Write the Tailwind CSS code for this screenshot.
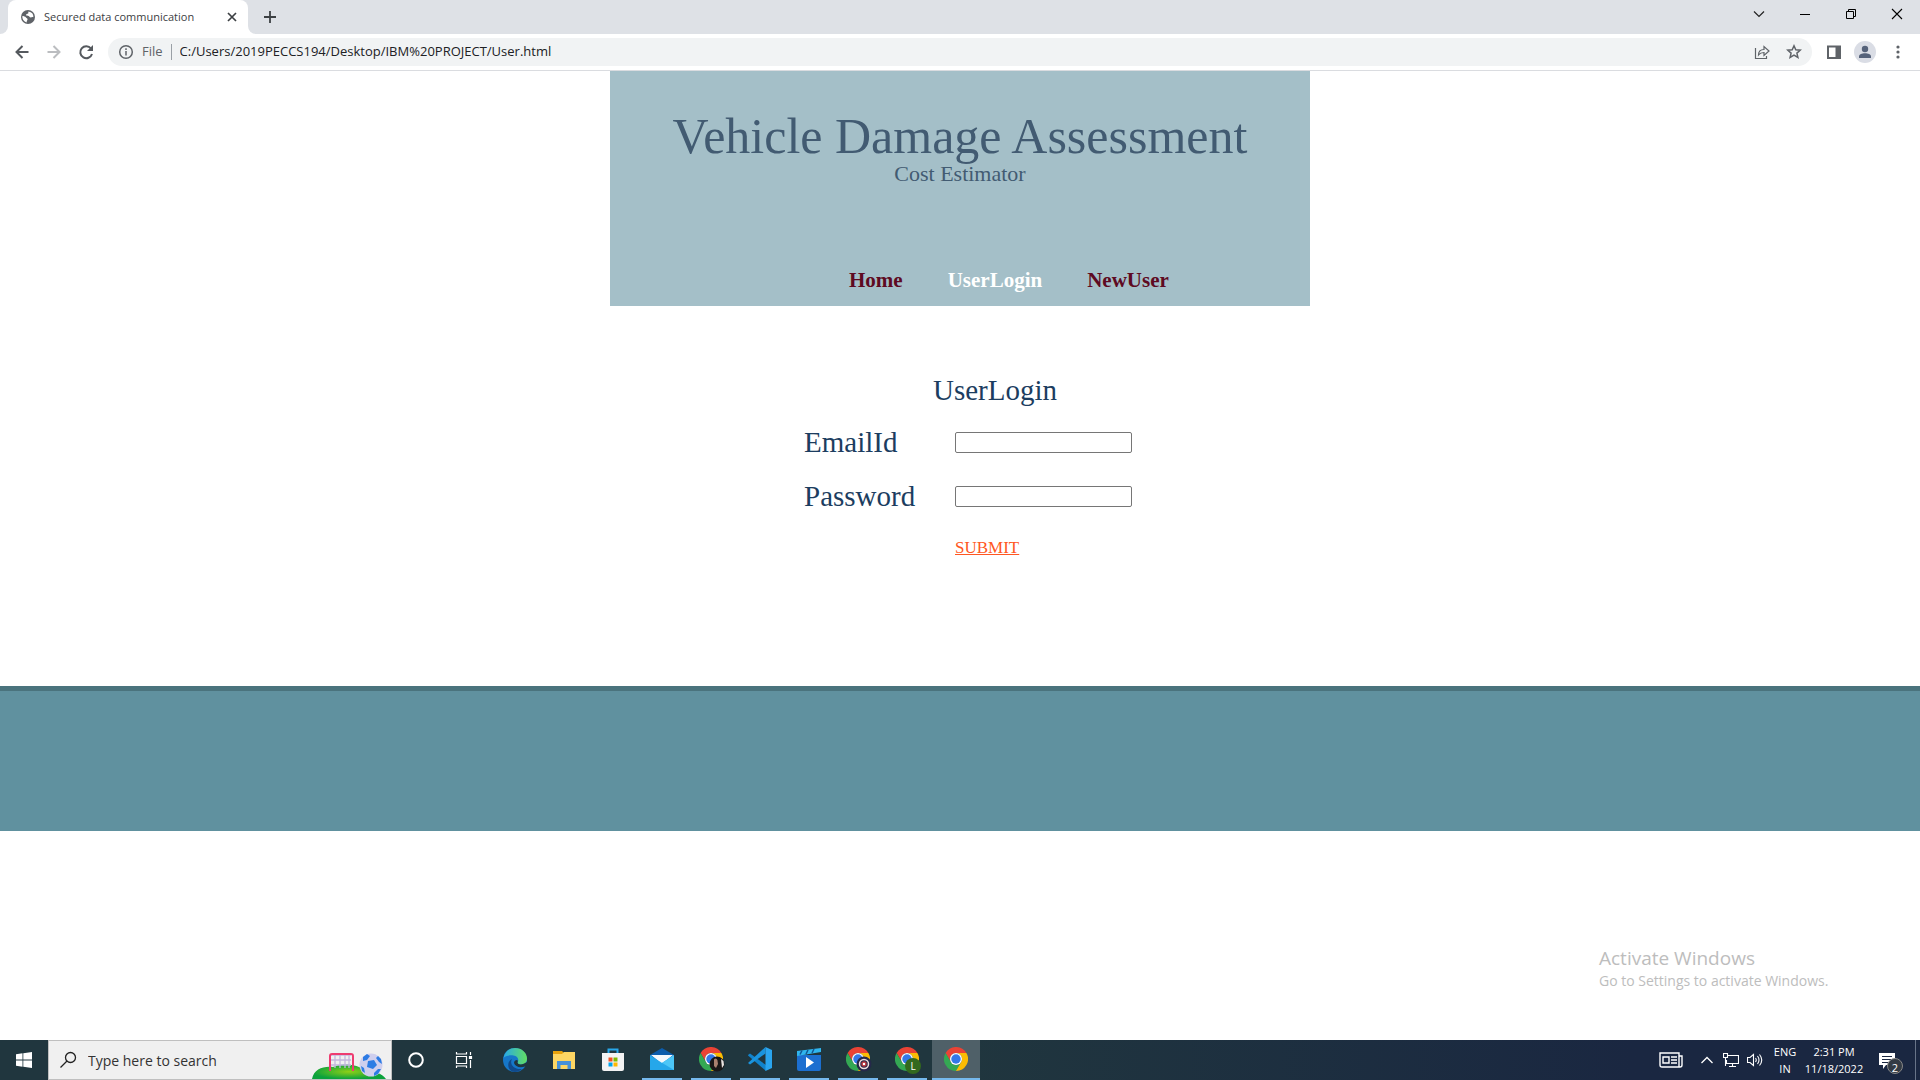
<!DOCTYPE html>
<html lang="en">
<head>
<meta charset="utf-8">
<title>Secured data communication</title>
<script src="https://cdn.jsdelivr.net/npm/@tailwindcss/browser@4"></script>
</head>
<body class="flex min-h-screen flex-col bg-white font-['Open_Sans',sans-serif] text-[#202124]">
<svg class="hidden">
  <symbol id="chrome" viewBox="0 0 48 48">
    <path fill="#ea4335" d="M3.2 12A24 24 0 0 1 44.8 12H24A12 12 0 0 0 13.6 30z"/>
    <path fill="#34a853" d="M3.2 12A24 24 0 0 0 24 48L34.4 30A12 12 0 0 1 13.6 30z"/>
    <path fill="#fbbc04" d="M44.8 12A24 24 0 0 1 24 48L34.4 30A12 12 0 0 0 24 12z"/>
    <circle cx="24" cy="24" r="12" fill="#fff"/><circle cx="24" cy="24" r="9.5" fill="#3478e8"/>
  </symbol>
</svg>

<!-- Browser window chrome -->
<div class="flex h-[34px] bg-[#dee1e6]">
  <div class="flex w-2 bg-white"><div class="flex-1 rounded-br-lg bg-[#dee1e6]"></div></div>
  <div class="flex w-60 items-center rounded-t-lg bg-white pr-2.5 pl-3">
    <svg class="size-4 shrink-0" viewBox="0 0 16 16"><circle cx="8" cy="8" r="7" fill="#5f6368"/><path fill="#fff" d="M8.5 2.4c-.6 1 .4 1.500-.4 2.200-.8.600-2 .4-2 1.400 0 1 1.500.6 2.600.9 1 .4.900 1.500 2 1.500.9 0 1.500-.500 2.700-.2A5.700 5.700 0 0 0 8.500 2.400zM2.400 7c1 0 3 .5 3.600 1.500.4.800 1.600.8 1.600 1.800s-1 1-.9 3.200A5.700 5.700 0 0 1 2.400 7z"/></svg>
    <span class="ml-2 flex-1 text-[11px] whitespace-nowrap text-[#3c4043]">Secured data communication</span>
    <button class="size-3" aria-label="Close tab"><svg viewBox="0 0 12 12" stroke="#3c4043" stroke-width="1.700"><path d="M2 2l8 8M10 2l-8 8"/></svg></button>
  </div>
  <div class="flex w-2 bg-white"><div class="flex-1 rounded-bl-lg bg-[#dee1e6]"></div></div>
  <button class="ml-1.5 w-4" aria-label="New tab"><svg viewBox="0 0 16 16" stroke="#3c4043" stroke-width="1.800"><path d="M8 2v12M2 8h12"/></svg></button>
  <div class="ml-auto flex h-7 items-center">
    <button class="grid w-[46px] place-items-center" aria-label="Search tabs"><svg class="size-3" viewBox="0 0 12 12" fill="none" stroke="#222" stroke-width="1.200"><path d="M1 3.500l5 5 5-5"/></svg></button>
    <button class="grid w-[46px] place-items-center" aria-label="Minimize"><svg class="size-3" viewBox="0 0 12 12" stroke="#000"><path d="M1 6.500h10"/></svg></button>
    <button class="grid w-[46px] place-items-center" aria-label="Restore"><svg class="size-3" viewBox="0 0 12 12" fill="none" stroke="#000"><path d="M1.500 3.500h7v7h-7zM3.500 3.500v-2h7v7h-2"/></svg></button>
    <button class="grid w-[46px] place-items-center" aria-label="Close"><svg class="size-3" viewBox="0 0 12 12" stroke="#000" stroke-width="1.100"><path d="M1 1l10 10M11 1L1 11"/></svg></button>
  </div>
</div>
<div class="flex h-[37px] items-center border-b border-[#dadce0] pl-3">
  <button aria-label="Back"><svg class="size-5" viewBox="0 0 20 20" fill="none" stroke="#55595e" stroke-width="2"><path d="M16.500 10H4M10.500 4L4.500 10l6 6"/></svg></button>
  <button class="ml-3" aria-label="Forward"><svg class="size-5" viewBox="0 0 20 20" fill="none" stroke="#bbbdc0" stroke-width="2"><path d="M3.500 10H16M9.500 4l6 6-6 6"/></svg></button>
  <button class="ml-3" aria-label="Reload"><svg class="size-5" viewBox="0 0 20 20"><path d="M15 6.500A6 6 0 1 0 16 12" fill="none" stroke="#55595e" stroke-width="2"/><path d="M17 3v6h-6z" fill="#55595e"/></svg></button>
  <div class="ml-3 flex h-7 flex-1 items-center rounded-full bg-[#f1f3f4] px-2.5">
    <svg class="size-4" viewBox="0 0 16 16" fill="none" stroke="#5f6368" stroke-width="1.500"><circle cx="8" cy="8" r="6.300"/><path d="M8 7v4.500M8 4.300v1.600"/></svg>
    <span class="ml-2 text-[13px] text-[#5f6368]">File</span>
    <span class="mx-2 h-4 w-px bg-[#9aa0a6]"></span>
    <input aria-label="Address" class="min-w-0 flex-1 bg-transparent text-[13px] outline-none" value="C:/Users/2019PECCS194/Desktop/IBM%20PROJECT/User.html">
    <button aria-label="Share"><svg class="size-4" viewBox="0 0 16 16" fill="none" stroke="#5f6368" stroke-width="1.200"><path d="M1.500 4v10.500h11V12M4.500 11c0-4 2.500-5.500 5.500-5.500V2.500l5 4.500-5 4.500v-3c-2.500 0-4 .5-5.500 2.500z"/></svg></button>
    <button class="ml-4" aria-label="Bookmark"><svg class="size-4" viewBox="0 0 16 16" fill="none" stroke="#5f6368" stroke-width="1.500"><path d="M8 1.800l1.800 4 4.400.4-3.300 2.900 1 4.300L8 11.100l-3.900 2.300 1-4.300L1.800 6.200l4.400-.4z"/></svg></button>
  </div>
  <button class="ml-3.5" aria-label="Side panel"><svg class="size-4" viewBox="0 0 16 16"><path fill="#5f6368" d="M1 1.500h14v13.500H1z"/><path fill="#fff" d="M3 3.500h6.500V13H3z"/></svg></button>
  <button class="ml-3" aria-label="Profile"><svg class="size-[22px]" viewBox="0 0 22 22"><circle cx="11" cy="11" r="11" fill="#dadde5"/><circle cx="11" cy="8" r="3.200" fill="#55627a"/><path fill="#55627a" d="M5 17v-1.500c0-2.200 3-3.300 6-3.300s6 1.100 6 3.300V17z"/></svg></button>
  <button class="mr-3.5 ml-3.5" aria-label="Menu"><svg class="size-4" viewBox="0 0 16 16" fill="#5f6368"><circle cx="8" cy="3" r="1.600"/><circle cx="8" cy="8" r="1.600"/><circle cx="8" cy="13" r="1.600"/></svg></button>
</div>

<!-- Page -->
<main class="flex-1 font-['Liberation_Serif',serif]">
  <header class="mx-auto h-[235px] w-[700px] bg-[#a4bfc8] pt-[39px] text-center text-[#425b72]">
    <h1 class="text-[50px] leading-[52px]">Vehicle Damage Assessment</h1>
    <p class="text-[22px] leading-6">Cost Estimator</p>
    <nav class="mt-[82px] ml-[239px] flex gap-[45px] text-[21px] leading-6 font-bold text-[#5e0a22]">
      <a href="#">Home</a><a href="#" class="text-white">UserLogin</a><a href="#">NewUser</a>
    </nav>
  </header>
  <form class="mx-auto h-[380px] w-[344px] pt-16 pl-4 text-[29px] leading-10 text-[#1c3d60]">
    <h2 class="pl-[129px]">UserLogin</h2>
    <div class="mt-3 flex items-center"><label for="email" class="w-[151px] shrink-0">EmailId</label><input id="email" type="text" class="h-[21px] w-[177px] shrink-0 rounded-xs border border-[#767676] px-1 text-sm"></div>
    <div class="mt-3.5 flex items-center"><label for="pw" class="w-[151px] shrink-0">Password</label><input id="pw" type="password" class="h-[21px] w-[177px] shrink-0 rounded-xs border border-[#767676] px-1 text-sm"></div>
    <a href="#" class="mt-3 ml-[151px] block text-[17px] text-[#ff5722] underline">SUBMIT</a>
  </form>
  <footer class="h-[145px] border-t-5 border-[#4a737d] bg-[#60919f]"></footer>
  <div class="ml-auto w-[321px] pt-[113px] font-['Open_Sans',sans-serif] text-[#bdbdbd]">
    <p class="text-[19px] leading-7">Activate Windows</p>
    <p class="text-[14px] leading-[18px] whitespace-nowrap">Go to Settings to activate Windows.</p>
  </div>
</main>

<!-- Taskbar -->
<div class="flex h-10 items-center bg-linear-to-r from-[#20363e] from-50% to-[#1a2741] to-85% text-white">
  <button class="grid w-12 place-items-center" aria-label="Start"><svg class="size-4" viewBox="0 0 16 16" fill="#fff"><path d="M0 2.200l6.500-.9v6.300H0zM7.300 1.200L16 0v7.600H7.300zM0 8.400h6.500v6.300L0 13.800zM7.300 8.400H16V16l-8.700-1.200z"/></svg></button>
  <div class="flex h-10 w-[344px] items-center border border-[#bfbfbf] bg-[#f0f0f0] pl-2.5">
    <svg class="size-[18px] shrink-0" viewBox="0 0 18 18" fill="none" stroke="#222" stroke-width="1.300"><circle cx="11.500" cy="6.500" r="5"/><path d="M8 10l-6.500 6.500"/></svg>
    <input aria-label="Search" placeholder="Type here to search" class="ml-[11px] w-[180px] text-[14px] outline-none placeholder:text-[#333]">
    <svg class="ml-auto h-[38px] w-[80px] shrink-0" viewBox="0 0 80 38">
      <defs><radialGradient id="hill"><stop offset="0" stop-color="#8fd016"/><stop offset="1" stop-color="#0ba23c"/></radialGradient></defs>
      <path d="M1 38C3 28 12 25 22 26c11-5 25-2 32 3 8 0 18 4 21 9z" fill="url(#hill)"/>
      <path d="M20 14h20M20 19h20M20 24h20M24 13v14M29 13v14M34 13v14M38 13v14" stroke="#c4b7dd" stroke-width="1.300"/>
      <path d="M19 30V15q0-2 2-2h19q2 0 2 2v15" fill="none" stroke="#ee3c70" stroke-width="2"/>
      <circle cx="60" cy="24" r="11.500" fill="#cfcfee"/>
      <path fill="#2d7ce4" d="M57 20l6-1 3 5-4 4-6-2zM52 16l4-3 3 2-3 4-4 1zM67 15l3 3 1 5-3-2-3-4zM50 25l3 2 1 5-3-2zM67 28l3 0-3 5-4 2 0-3z"/>
    </svg>
  </div>
  <button class="grid w-12 place-items-center" aria-label="Cortana"><svg class="size-4" viewBox="0 0 16 16"><circle cx="8" cy="8" r="6.800" fill="none" stroke="#fff" stroke-width="2"/></svg></button>
  <button class="mr-0.5 grid w-12 place-items-center" aria-label="Task view"><svg class="size-[18px]" viewBox="0 0 18 18" fill="none" stroke="#fff" stroke-width="1.200"><path d="M1.500 5.500h10v7h-10zM1.500 1v2h10V1M1.500 17v-2h10v2M15.500 1v3M15.500 9v8"/><path fill="#fff" d="M14.500 5.500h2v2h-2z"/></svg></button>
  <div class="flex h-10 gap-[9px] pl-[5px]">
    <button class="grid h-10 w-10 place-items-center" aria-label="Edge"><svg class="size-6" viewBox="0 0 24 24"><defs><linearGradient id="e1"><stop stop-color="#28a8e8"/><stop offset="1" stop-color="#62de62"/></linearGradient></defs><circle cx="12" cy="12" r="12" fill="#1677c9"/><path fill="url(#e1)" d="M.5 10C2 3 7 0 12 0c7 0 12 5 12 10.500 0 4-3 6-6 6-2.500 0-4-1-3.500-2 2-3 0-6.500-4-7C6 7 2 8 .5 10z"/><path fill="#114a8b" d="M9 11c-3 5 2 11 10 10-3 3-7 3.500-10 2.500C4 21 4 13 9 11z"/><path fill="#20363e" d="M14.500 14.500c.5 2.500 5 2.800 9.500-.5v4l-2 .5c-5 2-10 0-11-3.500 0-2 1.500-3 3-3 .8 0 1 1.500.5 2.500z"/></svg></button>
    <button class="grid h-10 w-10 place-items-center" aria-label="File Explorer"><svg class="size-6" viewBox="0 0 24 24"><path fill="#e8a20c" d="M1 3h9l2 2v4H1z"/><path fill="#fdd663" d="M1 6h9l2-2h11v17H1z"/><path fill="#4791d8" d="M5 13h14v8h-3.500v-4h-7v4H5z"/></svg></button>
    <button class="grid h-10 w-10 place-items-center" aria-label="Microsoft Store"><svg class="size-6" viewBox="0 0 24 24"><path d="M7.500 6V1.500h9V6" fill="none" stroke="#28a8ea" stroke-width="2"/><path fill="#f3f3f3" d="M1 5h22v16q0 2-2 2H3q-2 0-2-2z"/><path fill="#f25022" d="M7.500 9.500h4v4h-4z"/><path fill="#7fba00" d="M12.500 9.500h4v4h-4z"/><path fill="#00a4ef" d="M7.500 14.500h4v4h-4z"/><path fill="#ffb900" d="M12.500 14.500h4v4h-4z"/></svg></button>
    <button class="grid h-10 w-10 place-items-center border-b-2 border-[#76b9ed]" aria-label="Mail"><svg class="size-6" viewBox="0 0 24 24"><path fill="#0c5cab" d="M0 8l12-7 12 7v8H0z"/><path fill="#f4f8fc" d="M1 8h22L12 17z"/><path fill="#25a7ea" d="M0 8l12 8 12-8v15H0z"/><path fill="#4cc6f7" d="M24 8v15L9 14l3 2z"/></svg></button>
    <button class="grid h-10 w-10 place-items-center border-b-2 border-[#76b9ed]" aria-label="Chrome profile 1"><svg class="h-[26px] w-7" viewBox="0 0 28 26"><use href="#chrome" x="2" y="1" width="24" height="24"/><circle cx="20" cy="18" r="7.500" fill="#191717"/><path fill="#a97f6e" d="M17 13.500c1-2 3-1 3.500 1l.5 3.500-2 4-2-2z"/><path fill="#e8e4e2" d="M24 13l2.500 2 .5 4-2 3z"/></svg></button>
    <button class="grid h-10 w-10 place-items-center border-b-2 border-[#76b9ed]" aria-label="Visual Studio Code"><svg class="size-6" viewBox="0 0 24 24"><path fill="#1183cc" d="M0 8l2-1.500L18 18v6L.3 8.700z"/><path fill="#1a94de" d="M0 16L17.500 0v6.500L2 17.500z"/><path fill="#2aa5ef" d="M17.500 0L24 3v18l-6.500 3z"/></svg></button>
    <button class="grid h-10 w-10 place-items-center border-b-2 border-[#76b9ed]" aria-label="Movies"><svg class="size-6" viewBox="0 0 24 24"><path fill="#1c6fd0" d="M0 8h24v14q0 2-2 2H2q-2 0-2-2z"/><path fill="#2fb5ee" d="M0 4L24 1v4L0 9z"/><path stroke="#125694" stroke-width="1.500" d="M5 3.500l-2 4M11 3l-2 4M17 2l-2 4"/><path fill="#fff" d="M9 10l8 5.500-8 5.500z"/></svg></button>
    <button class="grid h-10 w-10 place-items-center border-b-2 border-[#76b9ed]" aria-label="Chrome profile 2"><svg class="h-[26px] w-7" viewBox="0 0 28 26"><use href="#chrome" x="2" y="1" width="24" height="24"/><circle cx="20" cy="18" r="7.500" fill="#25294a"/><circle cx="20" cy="18" r="4.500" fill="#25294a" stroke="#f0dede" stroke-width="1.500"/><circle cx="20" cy="18" r="2" fill="#fff" stroke="#b8353d" stroke-width="1.500"/></svg></button>
    <button class="relative grid h-10 w-10 place-items-center border-b-2 border-[#76b9ed]" aria-label="Chrome profile L"><svg class="size-6"><use href="#chrome"/></svg><span class="absolute top-[18px] left-[18px] grid size-4 place-items-center rounded-full bg-[#33691e] text-[10px]">L</span></button>
  </div>
  <button class="ml-[5px] grid h-10 w-12 place-items-center border-b-2 border-[#76b9ed] bg-[#4f6068]" aria-label="Chrome"><svg class="size-6"><use href="#chrome"/></svg></button>
  <div class="ml-auto flex h-10 items-center text-center text-[11px] leading-[17px]">
    <svg class="h-4 w-6" viewBox="0 0 24 16" fill="none" stroke="#fff" stroke-width="1.400"><path d="M1 1h19v14H3q-2 0-2-2zM20 4h3v9q0 2-2 2h-3M4 5h6v6H4zM12 5h6M12 8h6M12 11h6"/></svg>
    <svg class="ml-[18px] h-3 w-3" viewBox="0 0 12 12" fill="none" stroke="#fff" stroke-width="1.300"><path d="M.5 9L6 3.500 11.500 9"/></svg>
    <svg class="ml-2.5 size-4" viewBox="0 0 16 16" fill="none" stroke="#fff" stroke-width="1.100"><path d="M5 3.500h10.500v8H3.500V8M9.500 11.500v3M6 14.500h7M.5 1.500h4v4h-4zM2.500 6v8"/></svg>
    <svg class="ml-2 size-4" viewBox="0 0 16 16" fill="none" stroke="#fff" stroke-width="1.100"><path d="M.5 5.500h2.500l3.500-3v11L3 10.500H.5zM8.500 6q1.500 2 0 4M10.500 4q3 4 0 8M12.500 2.500q4.500 5.500 0 11"/></svg>
    <div class="ml-2 w-7">ENG<br>IN</div>
    <div class="ml-1 w-[62px] whitespace-nowrap">2:31 PM<br>11/18/2022</div>
    <button class="relative ml-3.5 h-10 w-9" aria-label="Notifications"><svg class="mt-0.5 h-4 w-4" viewBox="0 0 16 16"><path fill="#fff" d="M0 0h16v12h-9l-3 4v-4H0z"/><path stroke="#1a2741" d="M3 3.500h10M3 6.500h10M3 9.500h7"/></svg><span class="absolute top-[18px] left-2 grid size-4 place-items-center rounded-full border border-[#888] bg-[#333b44] text-[11px]">2</span></button>
    <div class="h-10 w-[5px] border-l border-[#687488]"></div>
  </div>
</div>
</body>
</html>
